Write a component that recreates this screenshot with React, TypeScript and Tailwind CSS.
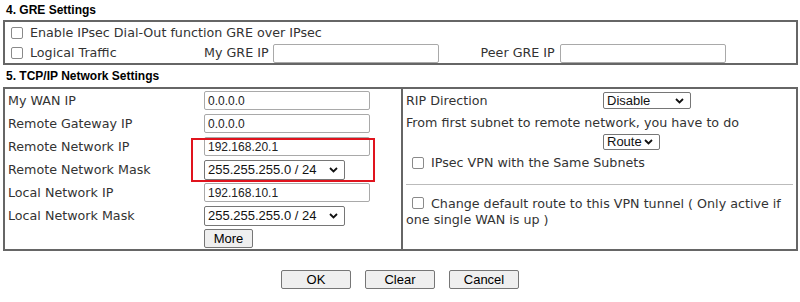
import React from 'react';

// Router-style VPN profile form: GRE + TCP/IP network settings
const label = "font-['DejaVu_Sans',Verdana,sans-serif] text-[12.7px] text-[#333]";
const heading = "font-['Liberation_Sans',Arial,sans-serif] font-bold text-[12px] text-black";
const field = "font-['Liberation_Sans',Arial,sans-serif] text-[12px] text-[#222]";

function Check() {
  return <span className="inline-block w-[12px] h-[12px] border border-[#8a8a8a] rounded-[2px] bg-white shrink-0" />;
}

function TextBox({ value = '', width = 'w-[166px]' }: { value?: string; width?: string }) {
  return (
    <div className={`${width} h-[19px] border border-[#a9a9a9] rounded-[2px] bg-white px-[3px] flex items-center ${field}`}>
      {value}
    </div>
  );
}

function Chevron() {
  return (
    <svg width="9" height="6" viewBox="0 0 9 6" className="shrink-0">
      <path d="M1 1 L4.5 4.5 L8 1" fill="none" stroke="#111" strokeWidth="1.8" />
    </svg>
  );
}

function Select({ value, width, height = 'h-[20px]' }: { value: string; width: string; height?: string }) {
  return (
    <div className={`${width} ${height} border border-[#767676] rounded-[2px] bg-white pl-[3px] pr-[6px] flex items-center justify-between font-['Liberation_Sans',Arial,sans-serif] text-[13px] text-[#111]`}>
      <span>{value}</span>
      <Chevron />
    </div>
  );
}

function Btn({ children, width = 'w-[70px]' }: { children: React.ReactNode; width?: string }) {
  return (
    <button className={`${width} h-[19px] border border-[#767676] rounded-[2px] bg-[#efefef] font-['Liberation_Sans',Arial,sans-serif] text-[13px] text-black leading-none`}>
      {children}
    </button>
  );
}

function Row({ name, children }: { name: string; children: React.ReactNode }) {
  return (
    <div className="h-[23px] flex items-center">
      <div className={`w-[199px] pl-[3px] ${label}`}>{name}</div>
      {children}
    </div>
  );
}

export default function App() {
  return (
    <div className="w-[800px] h-[302px] bg-white overflow-hidden">
      {/* 4. GRE */}
      <div className={`h-[20px] pl-[6px] flex items-center ${heading}`}>4. GRE Settings</div>
      <div className="mx-[3px] mr-[2px] h-[45px] border-2 border-[#666] flex flex-col">
        <div className="h-[21px] flex items-center gap-[7px] pl-[6px]">
          <Check />
          <span className={label}>Enable IPsec Dial-Out function GRE over IPsec</span>
        </div>
        <div className="h-[20px] flex items-center">
          <div className="w-[199px] flex items-center gap-[7px] pl-[6px]">
            <Check />
            <span className={label}>Logical Traffic</span>
          </div>
          <span className={`${label} mr-[4px]`}>My GRE IP</span>
          <TextBox />
          <span className={`${label} ml-[42px] mr-[5px]`}>Peer GRE IP</span>
          <TextBox />
        </div>
      </div>

      {/* 5. TCP/IP */}
      <div className={`h-[22px] pl-[6px] flex items-center ${heading}`}>5. TCP/IP Network Settings</div>
      <div className="mx-[3px] mr-[2px] h-[164px] border-2 border-[#666] grid grid-cols-[398px_1fr]">
        <div className="border-r-2 border-[#666] relative">
          <Row name="My WAN IP"><TextBox value="0.0.0.0" /></Row>
          <Row name="Remote Gateway IP"><TextBox value="0.0.0.0" /></Row>
          <Row name="Remote Network IP"><TextBox value="192.168.20.1" /></Row>
          <Row name="Remote Network Mask"><Select value="255.255.255.0 / 24" width="w-[141px]" /></Row>
          <Row name="Local Network IP"><TextBox value="192.168.10.1" /></Row>
          <Row name="Local Network Mask"><Select value="255.255.255.0 / 24" width="w-[141px]" /></Row>
          <Row name=""><Btn width="w-[49px]">More</Btn></Row>
          {/* highlight */}
          <div className="absolute left-[186px] top-[49px] w-[184px] h-[44px] border-2 border-[#e0141e]" />
        </div>
        <div className="pl-[3px]">
          <div className="h-[23px] flex items-center">
            <div className={`w-[197px] ${label}`}>RIP Direction</div>
            <Select value="Disable" width="w-[88px]" height="h-[17px]" />
          </div>
          <div className={`h-[21px] flex items-center ${label}`}>From first subnet to remote network, you have to do</div>
          <div className="h-[17px] flex items-center pl-[197px]">
            <Select value="Route" width="w-[57px]" height="h-[16px]" />
          </div>
          <div className="h-[25px] flex items-center gap-[7px] pl-[6px]">
            <Check />
            <span className={label}>IPsec VPN with the Same Subnets</span>
          </div>
          <div className="h-[10px] flex items-end">
            <div className="w-full mr-[3px] border-t border-[#bbb]" />
          </div>
          <div className={`pt-[11px] pr-[6px] leading-[16px] ${label}`}>
            <span className="inline-flex align-[-1px] mr-[7px] ml-[6px]"><Check /></span>
            Change default route to this VPN tunnel ( Only active if one single WAN is up )
          </div>
        </div>
      </div>

      {/* actions */}
      <div className="mt-[19px] flex justify-center gap-[14px]">
        <Btn>OK</Btn>
        <Btn>Clear</Btn>
        <Btn>Cancel</Btn>
      </div>
    </div>
  );
}
